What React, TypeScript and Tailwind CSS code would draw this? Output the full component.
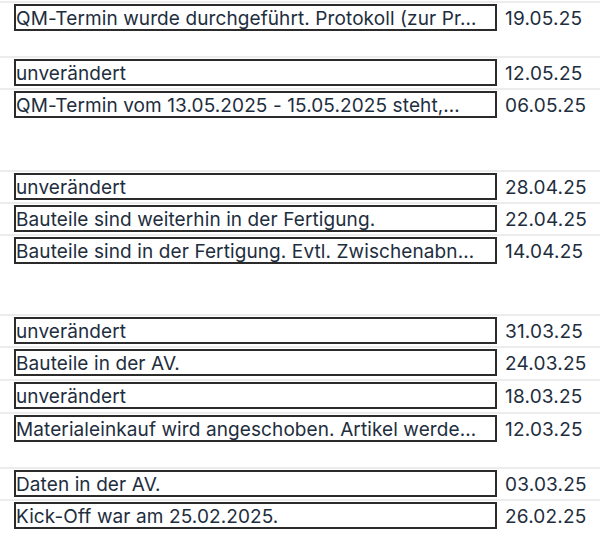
const rows = [
  { text: 'QM-Termin wurde durchgeführt. Protokoll (zur Pr…', date: '19.05.25', h: 'h-[55px]' },
  { text: 'unverändert', date: '12.05.25', h: 'h-[32px]' },
  { text: 'QM-Termin vom 13.05.2025 - 15.05.2025 steht,…', date: '06.05.25', h: 'h-[82px]' },
  { text: 'unverändert', date: '28.04.25', h: 'h-[32px]' },
  { text: 'Bauteile sind weiterhin in der Fertigung.', date: '22.04.25', h: 'h-[32px]' },
  { text: 'Bauteile sind in der Fertigung. Evtl. Zwischenabn…', date: '14.04.25', h: 'h-[80px]' },
  { text: 'unverändert', date: '31.03.25', h: 'h-[32px]' },
  { text: 'Bauteile in der AV.', date: '24.03.25', h: 'h-[33px]' },
  { text: 'unverändert', date: '18.03.25', h: 'h-[33px]' },
  { text: 'Materialeinkauf wird angeschoben. Artikel werde…', date: '12.03.25', h: 'h-[55px]' },
  { text: 'Daten in der AV.', date: '03.03.25', h: 'h-[32px]' },
  { text: 'Kick-Off war am 25.02.2025.', date: '26.02.25', h: 'h-[33px]' },
];

export default function App() {
  return (
    <div className="w-[600px] h-[534px] overflow-hidden bg-white pt-px font-['Inter',sans-serif] text-[19px] tracking-[0.1px] text-[#1e2e3e]">
      {rows.map((row, i) => (
        <div key={i} className={`${row.h} border-t-2 border-[#ececec] flex items-start pl-[14px] pt-px`}>
          <div className="w-[483px] h-[27px] border-2 border-[#2b2b2b] overflow-hidden whitespace-nowrap leading-[26px]">
            {row.text}
          </div>
          <div className="ml-[8px] leading-[30px] tracking-[0.2px]">{row.date}</div>
        </div>
      ))}
    </div>
  );
}
